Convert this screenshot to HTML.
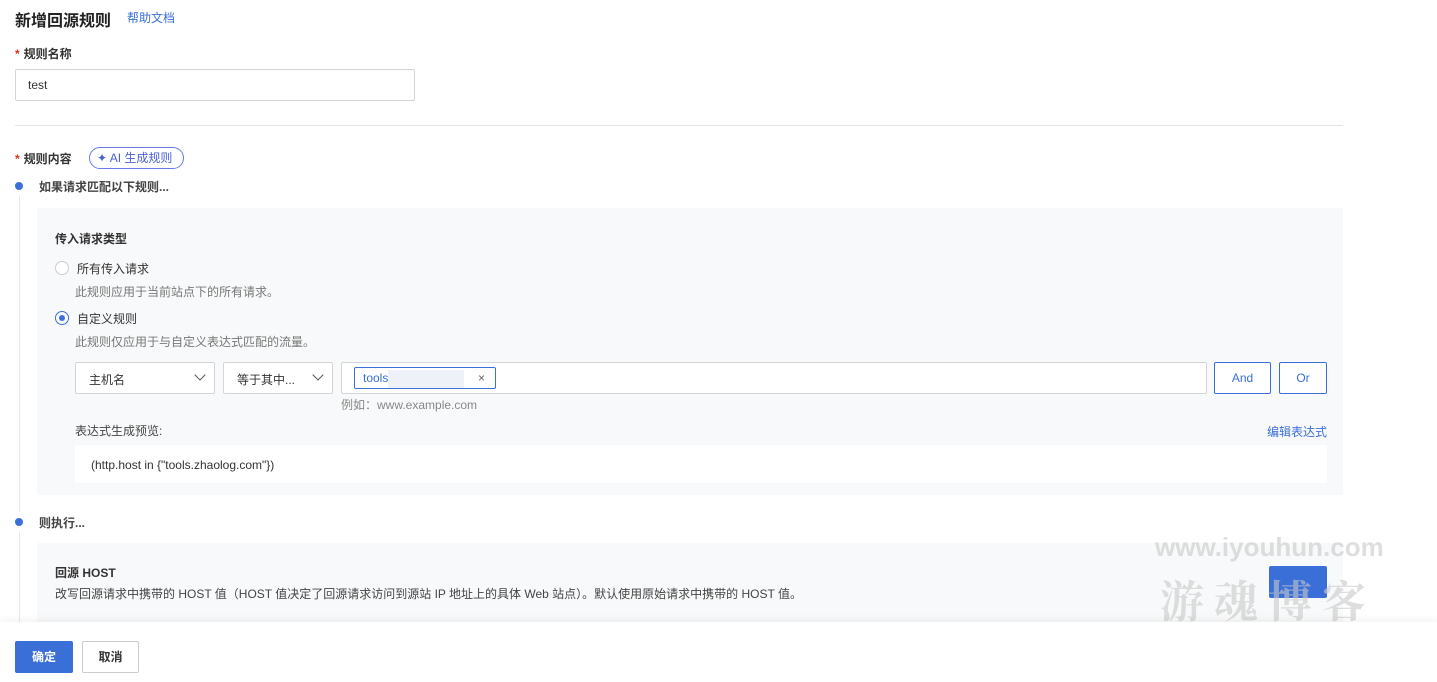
<!DOCTYPE html>
<html><head><meta charset="utf-8"><style>
*{box-sizing:border-box;margin:0;padding:0}
body{width:1437px;height:682px;overflow:hidden;background:#fff;font-family:"Liberation Sans","Noto Sans CJK SC",sans-serif;color:#333;font-size:12px;position:relative}
.a{position:absolute}
.star{color:#d93026;margin-right:4px}
.box{border:1px solid #d5d5d5;background:#fff;border-radius:2px}
.chev{position:absolute;right:10px;top:8px;width:8px;height:8px;border-right:1.3px solid #555;border-bottom:1.3px solid #555;transform:rotate(45deg)}
.btn{border:1px solid #3a6fd8;color:#3a6fd8;background:#fff;border-radius:2px;text-align:center;line-height:30px;font-size:12px}
.gray{color:#777}
</style></head><body>
<div class="a" style="left:15px;top:7px;font-size:16px;font-weight:bold;color:#222">新增回源规则</div>
<div class="a" style="left:127px;top:9px;font-size:12px;color:#3a6fd8">帮助文档</div>
<div class="a" style="left:15px;top:45px;font-weight:bold;color:#333"><span class="star">*</span>规则名称</div>
<div class="a box" style="left:15px;top:69px;width:400px;height:32px;padding:8px 12px">test</div>
<div class="a" style="left:15px;top:125px;width:1328px;height:1px;background:#e5e5e5"></div>
<div class="a" style="left:15px;top:150px;font-weight:bold"><span class="star">*</span>规则内容</div>
<div class="a" style="left:89px;top:147px;width:95px;height:22px;border:1px solid #6a7be8;border-radius:11px;color:#4a5fd8;line-height:20px;padding-left:7px">✦ AI 生成规则</div>
<div class="a" style="left:15px;top:182px;width:8px;height:8px;border-radius:4px;background:#3a6fd8"></div>
<div class="a" style="left:39px;top:178px;font-weight:bold;color:#444">如果请求匹配以下规则...</div>
<div class="a" style="left:19px;top:196px;width:1px;height:316px;background:#e8e8e8"></div>
<div class="a" style="left:37px;top:208px;width:1306px;height:287px;background:#f8f9fa"></div>
<div class="a" style="left:55px;top:230px;font-weight:bold">传入请求类型</div>
<div class="a" style="left:55px;top:261px;width:14px;height:14px;border:1px solid #ccc;border-radius:7px;background:#fff"></div>
<div class="a" style="left:77px;top:260px">所有传入请求</div>
<div class="a gray" style="left:75px;top:283px">此规则应用于当前站点下的所有请求。</div>
<div class="a" style="left:55px;top:311px;width:14px;height:14px;border:1px solid #3a6fd8;border-radius:7px;background:#fff"><div style="margin:3px;width:6px;height:6px;border-radius:3px;background:#3a6fd8"></div></div>
<div class="a" style="left:77px;top:310px">自定义规则</div>
<div class="a gray" style="left:75px;top:333px">此规则仅应用于与自定义表达式匹配的流量。</div>
<div class="a box" style="left:75px;top:362px;width:140px;height:32px;padding:8px 13px">主机名<span class="chev"></span></div>
<div class="a box" style="left:223px;top:362px;width:110px;height:32px;padding:8px 13px">等于其中...<span class="chev"></span></div>
<div class="a box" style="left:341px;top:362px;width:866px;height:32px"></div>
<div class="a" style="left:354px;top:367px;width:142px;height:22px;border:1px solid #3a6fd8;border-radius:2px;background:#fff;color:#3a6fd8;line-height:20px;padding-left:8px">tools<span style="display:inline-block;width:76px;height:18px;background:#eef1f8;vertical-align:middle"></span><span style="position:absolute;right:10px;color:#666">×</span></div>
<div class="a gray" style="left:341px;top:396px;color:#888">例如：www.example.com</div>
<div class="a btn" style="left:1214px;top:362px;width:57px;height:32px">And</div>
<div class="a btn" style="left:1279px;top:362px;width:48px;height:32px">Or</div>
<div class="a" style="left:75px;top:422px;color:#444">表达式生成预览:</div>
<div class="a" style="left:1267px;top:423px;color:#3a6fd8">编辑表达式</div>
<div class="a" style="left:75px;top:445px;width:1252px;height:38px;background:#fff;padding:13px 16px;color:#333">(http.host in {"tools.zhaolog.com"})</div>
<div class="a" style="left:15px;top:518px;width:8px;height:8px;border-radius:4px;background:#3a6fd8"></div>
<div class="a" style="left:39px;top:514px;font-weight:bold;color:#444">则执行...</div>
<div class="a" style="left:19px;top:532px;width:1px;height:90px;background:#e8e8e8"></div>
<div class="a" style="left:37px;top:543px;width:1306px;height:80px;background:#f8f9fa"></div>
<div class="a" style="left:55px;top:564px;font-weight:bold">回源 HOST</div>
<div class="a" style="left:55px;top:585px;color:#444">改写回源请求中携带的 HOST 值（HOST 值决定了回源请求访问到源站 IP 地址上的具体 Web 站点）。默认使用原始请求中携带的 HOST 值。</div>
<div class="a" style="left:1269px;top:566px;width:58px;height:32px;background:#3a6fd8;border-radius:2px"></div>
<div class="a" style="left:1155px;top:532px;font-size:26px;font-weight:bold;color:rgba(200,200,200,.6)">www.iyouhun.com</div>
<div class="a" style="left:1160px;top:566px;font-size:44px;font-weight:bold;letter-spacing:10px;color:rgba(200,200,200,.6);font-family:'Noto Serif CJK SC',serif">游魂博客</div>
<div class="a" style="left:0;top:622px;width:1437px;height:60px;background:#fff;box-shadow:0 -2px 8px rgba(0,0,0,.06)"></div>
<div class="a" style="left:15px;top:641px;width:58px;height:32px;background:#3a6fd8;color:#fff;border-radius:2px;text-align:center;line-height:32px;font-weight:bold">确定</div>
<div class="a" style="left:82px;top:641px;width:57px;height:32px;border:1px solid #ccc;border-radius:2px;text-align:center;line-height:30px;font-weight:bold">取消</div>
</body></html>
